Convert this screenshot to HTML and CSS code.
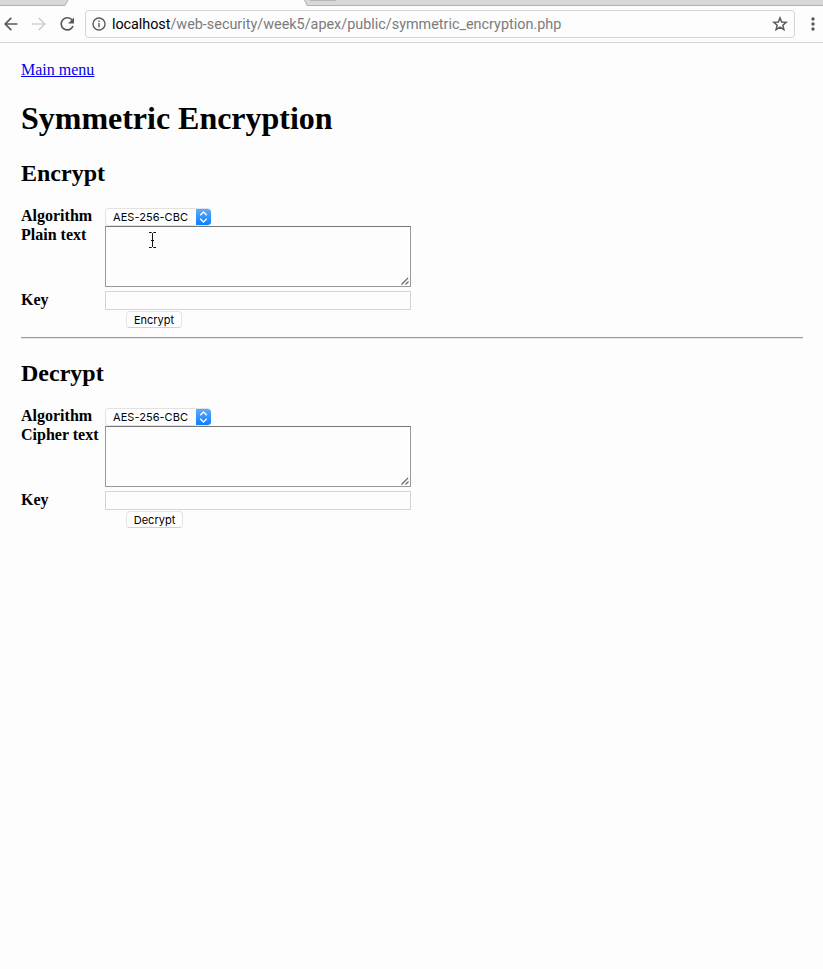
FILE: index.html
```html
<!DOCTYPE html>
<html lang="en">
<head>
<meta charset="utf-8">
<title>Symmetric Encryption</title>
<link rel="stylesheet" href="styles.css">
</head>
<body>
<header class="browser">
  <svg class="tabs" width="823" height="6" viewBox="0 0 823 6">
    <path d="M0 0H68L65.5 5H0Z" fill="#d8d8d8"/>
    <path d="M304.500 0H823V5H307Z" fill="#d8d8d8"/>
    <path d="M310 0H336V1H310Z" fill="#b8b8b8"/>
    <path d="M0 5.500H65L68 0M304.500 0L307 5.500H823" fill="none" stroke="#b2b2b2"/>
  </svg>
  <div class="toolbar">
    <svg class="nav" width="84" height="36" viewBox="0 0 84 36" fill="none" stroke-width="1.700">
      <path d="M17.500 18H5.500M11.300 11.800L5.200 18L11.300 24.200" stroke="#5a5a5a"/>
      <path d="M32 18H44.500M38.700 11.800L44.800 18L38.700 24.200" stroke="#d2d2d2"/>
      <path d="M72.200 14.200A6.100 6.100 0 1 0 73 20" stroke="#5a5a5a"/>
      <path d="M74 11.500V17.500H68Z" fill="#5a5a5a"/>
    </svg>
    <div class="omnibox">
      <svg class="info" width="14" height="14" viewBox="0 0 14 14" fill="none" stroke="#5a5a5a" stroke-width="1.400">
        <circle cx="7" cy="7" r="6"/><path d="M7 6V10.300M7 3.500V5"/>
      </svg>
      <span class="url"><b>localhost</b>/web-security/week5/apex/public/symmetric_encryption.php</span>
      <svg class="star" width="16" height="16" viewBox="0 0 16 16" fill="none" stroke="#5a5a5a" stroke-width="1.500">
        <path d="M8 1.900L9.700 6L14.200 6.300L10.800 9.200L11.900 13.600L8 11.200L4.100 13.600L5.200 9.200L1.800 6.300L6.300 6Z"/>
      </svg>
    </div>
    <svg class="menu" width="4" height="14" viewBox="0 0 4 14" fill="#5a5a5a">
      <circle cx="2" cy="2" r="1.700"/><circle cx="2" cy="7" r="1.700"/><circle cx="2" cy="12" r="1.700"/>
    </svg>
  </div>
</header>
<main>
  <a class="home" href="#">Main menu</a>
  <h1>Symmetric Encryption</h1>
  <section>
    <h2>Encrypt</h2>
    <form>
      <label>Algorithm</label>
      <div class="select"><span>AES-256-CBC</span><i><svg width="15" height="18" viewBox="0 0 15 18" fill="none" stroke="#fff" stroke-width="1.300"><path d="M4.200 7.300L7.500 4L10.800 7.300M4.200 10.700L7.500 14L10.800 10.700"/></svg></i></div>
      <label>Plain text</label>
      <div class="area"><svg width="8" height="8" viewBox="0 0 8 8" stroke="#666" stroke-width="1.200"><path d="M0.500 7.500L7 1M4.500 7.500L7.500 4.500"/></svg></div>
      <label>Key</label>
      <input class="key" type="text">
      <button type="button" class="encrypt">Encrypt</button>
    </form>
  </section>
  <hr>
  <section>
    <h2>Decrypt</h2>
    <form>
      <label>Algorithm</label>
      <div class="select"><span>AES-256-CBC</span><i><svg width="15" height="18" viewBox="0 0 15 18" fill="none" stroke="#fff" stroke-width="1.300"><path d="M4.200 7.300L7.500 4L10.800 7.300M4.200 10.700L7.500 14L10.800 10.700"/></svg></i></div>
      <label>Cipher text</label>
      <div class="area"><svg width="8" height="8" viewBox="0 0 8 8" stroke="#666" stroke-width="1.200"><path d="M0.500 7.500L7 1M4.500 7.500L7.500 4.500"/></svg></div>
      <label>Key</label>
      <input class="key" type="text">
      <button type="button" class="decrypt">Decrypt</button>
    </form>
  </section>
</main>
<svg class="pointer" width="7" height="16" viewBox="0 0 7 16" fill="none" stroke="#111"><path d="M0 .5H2.500L3.500 1.500L4.500 .5H7M3.500 1.500V14.500M0 15.500H2.500L3.500 14.500L4.500 15.500H7M2 8.500H5"/></svg>
</body>
</html>
```
FILE: styles.css
```css
* { box-sizing: border-box; }
body {
  margin: 0;
  min-height: 969px;
  background: #fdfdfd;
  color: #000;
  font: 16px/19px "Liberation Serif", serif;
}
svg { display: block; flex: none; }
.browser { height: 43px; border-bottom: 1px solid #d6d6d6; }
.toolbar { display: flex; align-items: center; height: 36px; }
.omnibox {
  display: flex;
  align-items: center;
  width: 710px;
  height: 28px;
  margin-left: 1px;
  padding: 0 6px;
  border: 1px solid #d4d4d4;
  border-radius: 4px;
}
.url {
  flex: 1;
  margin-left: 6px;
  padding-top: 2px;
  color: #7b7b7b;
  font: 14.4px/20px Roboto, sans-serif;
  white-space: nowrap;
}
.url b { color: #000; font-weight: 400; letter-spacing: -0.05px; }
.menu { margin-left: 16px; }

main { padding: 17px 20px 0 21px; }
.home { display: block; width: max-content; color: #0000ee; }
h1 { margin: 21px 0 0; font-size: 32px; line-height: 37px; letter-spacing: -0.02px; }
h2 { margin: 0; font-size: 24px; line-height: 28px; }
h1 + section h2 { margin-top: 22px; }
hr + section h2 { margin-top: 20px; }
form {
  display: grid;
  grid-template-columns: 84px 306px;
  grid-template-rows: 19px 65px 20px 17px;
  margin-top: 20px;
}
label { margin-top: -1px; font-weight: 700; }
.select {
  display: flex;
  justify-content: space-between;
  width: 106px;
  height: 18px;
  margin-top: 1px;
  overflow: hidden;
  border: 1px solid #e2e2e2;
  border-right: 0;
  border-radius: 4px;
  background: #fff;
  font: 11px/16px Inter, sans-serif;
}
.select span { margin-left: 7px; letter-spacing: 0.05px; }
.select i { width: 15px; height: 18px; margin-top: -1px; background: linear-gradient(#61aefb, #087cff); }
.area {
  display: flex;
  align-items: flex-end;
  justify-content: flex-end;
  height: 61px;
  padding: 1px;
  border: 1px solid #999;
  border-top-color: #777;
  background: #fdfdfd;
}
.key { width: 306px; height: 19px; padding: 0; border: 1px solid #d4d4d4; background: #fdfdfd; }
button {
  grid-column: 2;
  height: 17px;
  margin-left: 21px;
  padding: 0;
  border: 1px solid #e4e4e4;
  border-bottom-color: #d2d2d2;
  border-radius: 4px;
  background: #fff;
  color: #000;
  font: 11px/14px Inter, sans-serif;
}
.encrypt { width: 56px; }
.decrypt { width: 57px; }
hr { height: 2px; margin: 9px 0 0; border: 0; border-top: 1px solid #999; border-bottom: 1px solid #e8e8e8; }
.pointer { position: absolute; left: 149px; top: 232px; }
```
